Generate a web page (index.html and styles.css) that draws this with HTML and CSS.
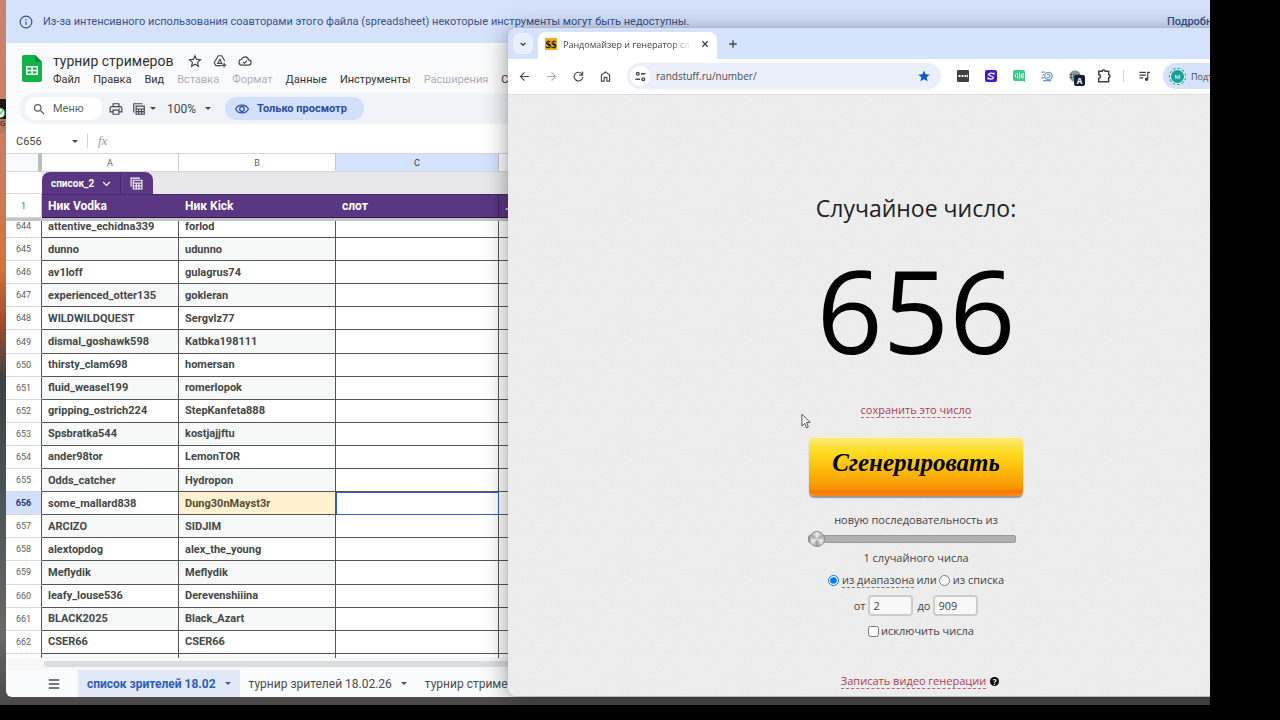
FILE: index.html
```html
<!DOCTYPE html>
<html lang="ru">
<head>
    <meta charset="UTF-8">
    <meta name="viewport" content="width=device-width, initial-scale=1.0">
    <title>Рандомайзер и генератор случайных чисел</title>
    <link rel="stylesheet" href="styles.css">
</head>
<body>
<div class="desktop">
    <div class="shortcut">
        <svg viewBox="0 0 6 12"><circle cx="0" cy="6" r="5" fill="#e4f5e4" stroke="#2c8a3d"/><path d="M0 7l3-4" stroke="#2c8a3d"/></svg>
        <span>G</span>
    </div>

    <!-- Spreadsheet window -->
    <main class="window sheets">
        <div class="notice">
            <svg class="icon-notice" viewBox="0 0 24 24" fill="none" stroke="currentColor" stroke-width="2"><circle cx="12" cy="12" r="10"/><path d="M12 11v6M12 7v2"/></svg>
            <p>Из-за интенсивного использования соавторами этого файла (spreadsheet) некоторые инструменты могут быть недоступны.</p>
            <a href="#">Подробнее</a>
        </div>

        <header class="doc-head">
            <svg class="logo" viewBox="0 0 20 27"><path fill="#12b347" d="M2 0h11l7 7v18a2 2 0 0 1-2 2H2a2 2 0 0 1-2-2V2a2 2 0 0 1 2-2z"/><path fill="#0a8a3c" d="M13 0l7 7h-5a2 2 0 0 1-2-2z"/><path fill="#fff" fill-rule="evenodd" d="M4 11h12v9H4zM5.500 12.500v2.200h3.700v-2.200zM10.800 12.500v2.200h3.700v-2.200zM5.500 16.300v2.200h3.700v-2.200zM10.800 16.300v2.200h3.700v-2.200z"/></svg>
            <div class="doc-info">
                <div class="doc-title">
                    <h1>турнир стримеров</h1>
                    <button aria-label="Избранное"><svg viewBox="0 0 24 24" fill="none" stroke="currentColor" stroke-width="2"><path d="M12 3l2.700 6.200 6.800.6-5.100 4.500 1.500 6.700-5.900-3.500L6.100 21l1.500-6.700-5.100-4.500 6.800-.6z"/></svg></button>
                    <button aria-label="Добавить на Диск"><svg viewBox="0 0 24 24" fill="none" stroke="currentColor" stroke-width="2"><path d="M15 20H5l-3-5L9 3h6l5 9M12 9l-4 7h7zM19 15v8M15 19h8"/></svg></button>
                    <button aria-label="Сохранено"><svg viewBox="0 0 24 24" fill="none" stroke="currentColor" stroke-width="2"><path d="M7 19a5 5 0 0 1-.6-10A6 6 0 0 1 18 10a4.500 4.500 0 0 1 0 9zM8.500 13.500l2.500 2.500 4.500-4.500"/></svg></button>
                </div>
                <nav class="menu">
                    <button>Файл</button>
                    <button>Правка</button>
                    <button>Вид</button>
                    <button disabled>Вставка</button>
                    <button disabled>Формат</button>
                    <button>Данные</button>
                    <button>Инструменты</button>
                    <button disabled>Расширения</button>
                    <button>Справка</button>
                </nav>
            </div>
        </header>

        <div class="toolbar">
            <button class="search"><svg viewBox="0 0 24 24" fill="none" stroke="currentColor" stroke-width="2.500"><circle cx="9.500" cy="9.500" r="6.500"/><path d="M14.500 14.500L22 22"/></svg>Меню</button>
            <button class="tool" aria-label="Печать"><svg viewBox="0 0 24 24" fill="none" stroke="currentColor" stroke-width="2"><path d="M7 8V3h10v5M6 17H2v-6a3 3 0 0 1 3-3h14a3 3 0 0 1 3 3v6h-4M7 14h10v7H7zM17 11.500h2"/></svg></button>
            <button class="tool filters" aria-label="Фильтры"><svg viewBox="0 0 24 24" fill="none" stroke="currentColor" stroke-width="2"><path d="M3 18V3h15M7 7h14v14H7zM7 12h14M7 16.500h14M11.500 12v9M16.500 12v9"/></svg><i class="caret"></i></button>
            <button class="tool zoom">100% <i class="caret"></i></button>
            <button class="view-only"><svg viewBox="0 0 24 24" fill="none" stroke="currentColor" stroke-width="2"><path d="M1 12c4-9 18-9 22 0-4 9-18 9-22 0z"/><circle cx="12" cy="12" r="4"/></svg>Только просмотр</button>
        </div>

        <div class="formula">
            <button class="cell-name">C656 <i class="caret"></i></button>
            <span class="fx">fx</span>
        </div>

        <div class="grid">
            <table class="cells frozen">
                <colgroup><col class="num"><col class="a"><col class="b"><col class="c"><col></colgroup>
                <tr class="letters"><th></th><th>A</th><th>B</th><th class="picked">C</th><th></th></tr>
                <tr class="list-row">
                    <td></td>
                    <td colspan="4"><div class="list-tab">
                        <button class="list-name">список_2 <svg viewBox="0 0 24 24" fill="none" stroke="currentColor" stroke-width="3"><path d="M3 8l9 9 9-9"/></svg></button>
                        <button class="list-calc" aria-label="Таблица"><svg viewBox="0 0 24 24" fill="none" stroke="currentColor" stroke-width="2"><path d="M2 18V2h16M6 6h16v16H6zM6 11h16M6 16.500h16M11.500 11v11M16.500 11v11"/></svg></button>
                    </div></td>
                </tr>
                <tr class="titles"><th>1</th><td>Ник Vodka</td><td>Ник Kick</td><td>слот</td><td>.</td></tr>
            </table>
            <div class="scroll">
                <table class="cells body">
                    <colgroup><col class="num"><col class="a"><col class="b"><col class="c"><col></colgroup>
                    <tr><th>644</th><td>attentive_echidna339</td><td>forlod</td><td></td><td></td></tr>
                    <tr><th>645</th><td>dunno</td><td>udunno</td><td></td><td></td></tr>
                    <tr><th>646</th><td>av1loff</td><td>gulagrus74</td><td></td><td></td></tr>
                    <tr><th>647</th><td>experienced_otter135</td><td>gokleran</td><td></td><td></td></tr>
                    <tr><th>648</th><td>WILDWILDQUEST</td><td>Sergvlz77</td><td></td><td></td></tr>
                    <tr><th>649</th><td>dismal_goshawk598</td><td>Katbka198111</td><td></td><td></td></tr>
                    <tr><th>650</th><td>thirsty_clam698</td><td>homersan</td><td></td><td></td></tr>
                    <tr><th>651</th><td>fluid_weasel199</td><td>romerlopok</td><td></td><td></td></tr>
                    <tr><th>652</th><td>gripping_ostrich224</td><td>StepKanfeta888</td><td></td><td></td></tr>
                    <tr><th>653</th><td>Spsbratka544</td><td>kostjajjftu</td><td></td><td></td></tr>
                    <tr><th>654</th><td>ander98tor</td><td>LemonTOR</td><td></td><td></td></tr>
                    <tr><th>655</th><td>Odds_catcher</td><td>Hydropon</td><td></td><td></td></tr>
                    <tr class="current"><th>656</th><td>some_mallard838</td><td class="winner">Dung30nMayst3r</td><td class="active"></td><td></td></tr>
                    <tr><th>657</th><td>ARCIZO</td><td>SIDJIM</td><td></td><td></td></tr>
                    <tr><th>658</th><td>alextopdog</td><td>alex_the_young</td><td></td><td></td></tr>
                    <tr><th>659</th><td>Meflydik</td><td>Meflydik</td><td></td><td></td></tr>
                    <tr><th>660</th><td>leafy_louse536</td><td>Derevenshiiina</td><td></td><td></td></tr>
                    <tr><th>661</th><td>BLACK2025</td><td>Black_Azart</td><td></td><td></td></tr>
                    <tr><th>662</th><td>CSER66</td><td>CSER66</td><td></td><td></td></tr>
                    <tr><th></th><td></td><td></td><td></td><td></td></tr>
                </table>
            </div>
            <div class="hbar"><span></span></div>
        </div>

        <footer class="tabs">
            <button class="all" aria-label="Все листы"><svg viewBox="0 0 24 24" fill="none" stroke="currentColor" stroke-width="2.500"><path d="M3 5h18M3 12h18M3 19h18"/></svg></button>
            <button class="tab on">список зрителей 18.02 <i class="caret"></i></button>
            <button class="tab">турнир зрителей 18.02.26 <i class="caret"></i></button>
            <button class="tab">турнир стримеров <i class="caret"></i></button>
        </footer>
    </main>

    <!-- Browser window -->
    <section class="window browser">
        <div class="strip">
            <button class="tab-search" aria-label="Поиск вкладок"><svg viewBox="0 0 24 24" fill="none" stroke="currentColor" stroke-width="4"><path d="M5 9l7 7 7-7"/></svg></button>
            <div class="page-tab">
                <span class="favicon">$$</span>
                <span class="page-name">Рандомайзер и генератор случайных чисел</span>
                <button aria-label="Закрыть"><svg viewBox="0 0 24 24" fill="none" stroke="currentColor" stroke-width="4"><path d="M4 4l16 16M20 4L4 20"/></svg></button>
            </div>
            <button class="new-tab" aria-label="Новая вкладка"><svg viewBox="0 0 24 24" fill="none" stroke="currentColor" stroke-width="4"><path d="M12 1v22M1 12h22"/></svg></button>
        </div>

        <div class="address">
            <button aria-label="Назад"><svg viewBox="0 0 24 24" fill="none" stroke="currentColor" stroke-width="2.500"><path d="M22 12H3M12 3l-9 9 9 9"/></svg></button>
            <button class="off" aria-label="Вперёд"><svg viewBox="0 0 24 24" fill="none" stroke="currentColor" stroke-width="2.500"><path d="M2 12h19M12 3l9 9-9 9"/></svg></button>
            <button aria-label="Обновить"><svg viewBox="0 0 24 24" fill="none" stroke="currentColor" stroke-width="2.500"><path d="M20 7a9.500 9.500 0 1 0 1.500 6M21 1v8h-8"/></svg></button>
            <button aria-label="Домой"><svg viewBox="0 0 24 24" fill="none" stroke="currentColor" stroke-width="2.500"><path d="M3 22V9l9-7 9 7v13h-6v-8H9v8z"/></svg></button>
            <div class="omnibox">
                <span class="site"><svg viewBox="0 0 24 24" fill="none" stroke="currentColor" stroke-width="3"><circle cx="6" cy="6" r="3"/><path d="M13 6h10M1 18h10"/><circle cx="18" cy="18" r="3"/></svg></span>
                <input type="text" value="randstuff.ru/number/" aria-label="Адрес">
                <svg class="star" viewBox="0 0 24 24"><path fill="#1558c8" d="M12 1l3.300 7.500 8.200.8-6.200 5.400 1.900 8L12 18.400l-7.200 4.300 1.900-8L.5 9.300l8.200-.8z"/></svg>
            </div>
            <div class="extensions">
                <svg viewBox="0 0 24 24"><rect width="24" height="24" rx="2" fill="#3f4347"/><path stroke="#fff" stroke-width="4" stroke-dasharray="4 2" d="M3 12h16"/><path stroke="#fff" stroke-width="1.500" d="M21 9v6"/></svg>
                <svg viewBox="0 0 24 24"><rect width="24" height="24" rx="4" fill="#4318d1"/><path fill="none" stroke="#fff" stroke-width="2.500" d="M18 9c-2-4-10-4-11 0 0 3 10 3 10 6-1 4-9 4-11 0M18 9V5M6 15v4"/></svg>
                <svg viewBox="0 0 24 24"><path fill="#3dcb85" d="M4 0h16a4 4 0 0 1 4 4v20l-4-2H4a4 4 0 0 1-4-4V4a4 4 0 0 1 4-4z"/><path stroke="#fff" stroke-width="2" d="M5 9v5M9 6v11M13 4v13M16.500 8v8M20 6v11"/></svg>
                <svg viewBox="0 0 24 24" fill="none" stroke="#6d94cf" stroke-width="2.500"><circle cx="15" cy="12" r="7.500"/><path d="M1 4h7M12 9h3a3 3 0 0 1 0 6h-4M3 9h3M1 14l5 3M4 21h16"/></svg>
                <span class="ext-globe"><svg viewBox="0 0 24 24" fill="none" stroke="#b8c9bd" stroke-width="1.500"><circle cx="12" cy="12" r="11" fill="#425a4b"/><ellipse cx="12" cy="12" rx="5" ry="11"/><path d="M1 12h22M3 6h18M3 18h18M12 1v22"/></svg><b>A</b></span>
                <svg class="puzzle" viewBox="0 0 24 24" fill="none" stroke="#3c4043" stroke-width="2.500"><path d="M3 4h6c0-3 5-3 5 0h6v6c3 0 3 5 0 5v7H3v-6c4 0 4-6 0-6z"/></svg>
            </div>
            <svg class="queue" viewBox="0 0 24 24" fill="none" stroke="#3c4043" stroke-width="2.500"><path d="M1 4h14M1 10h14M1 16h8M19 19V4h5"/><circle cx="16.500" cy="19" r="2.500" fill="#3c4043"/></svg>
            <button class="account"><span class="avatar">м</span>Подтвердите</button>
        </div>

        <div class="page">
            <h2>Случайное число:</h2>
            <output class="number">656</output>
            <a class="dashed" href="#">сохранить это число</a>
            <form class="generator">
                <button type="button" class="generate">Сгенерировать</button>
                <label for="count">новую последовательность из</label>
                <input type="range" id="count" min="1" max="100" value="1">
                <p>1 случайного числа</p>
                <div class="row">
                    <input type="radio" name="source" id="range" checked><label for="range" class="under">из диапазона</label>
                    <span class="or">или</span>
                    <input type="radio" name="source" id="list"><label for="list">из списка</label>
                </div>
                <div class="row limits">
                    <label for="from">от</label><input type="text" id="from" value="2">
                    <label for="to">до</label><input type="text" id="to" value="909">
                </div>
                <div class="row exclude"><input type="checkbox" id="exclude"><label for="exclude">исключить числа</label></div>
            </form>
            <div class="record"><a class="dashed" href="#">Записать видео генерации</a><span class="help">?</span></div>
        </div>
    </section>

    <svg class="cursor" viewBox="0 0 12 18"><path fill="#fff" stroke="#444" d="M1 1v13l3-3 2 5 2-1-2-5h4z"/></svg>
</div>
</body>
</html>
```

FILE: styles.css
```css
* {
box-sizing: border-box;
}

body {
margin: 0;
height: 100vh;
padding: 0 70px 15px 0;
background: #000;
font-family: Roboto, "Liberation Sans", sans-serif;
font-size: 12px;
color: #444746;
overflow: hidden;
}

button {
display: flex;
align-items: center;
padding: 0;
border: none;
background: none;
color: inherit;
font: inherit;
white-space: nowrap;
}

svg {
display: block;
flex: none;
width: 14px;
height: 14px;
}

h1, h2, p {
margin: 0;
font-weight: 400;
}

.desktop {
position: relative;
height: 100%;
overflow: hidden;
background: linear-gradient(#c98470, #cb7c5c 25%, #d2733c 38%, #a04a2c 46%, #3c4345 54%, #4a5456 70%, #6a6866 90%, #4a4848);
}

.shortcut {
position: absolute;
left: 0;
top: 99px;
width: 6px;
height: 34px;
padding-top: 8px;
background: linear-gradient(#1a1513 60%, #b87860 60%);
color: #222;
font-size: 8px;
overflow: hidden;
}

.shortcut svg {
width: 6px;
height: 12px;
}

.window {
position: absolute;
display: flex;
flex-direction: column;
overflow: hidden;
border-radius: 8px;
}

.caret {
border: 3px solid transparent;
border-top-color: currentColor;
border-bottom: none;
}

/* spreadsheet */
.sheets {
left: 6px;
right: 0;
top: 0;
bottom: 8px;
border-radius: 0 0 0 6px;
background: #f9fbfd;
}

.notice {
display: flex;
align-items: center;
height: 43px;
flex: none;
padding: 0 0 0 13px;
gap: 10px;
background: #d6e2fc;
color: #35528f;
font-size: 11px;
overflow: hidden;
white-space: nowrap;
}

.notice a {
margin-left: auto;
margin-right: -14px;
color: inherit;
text-decoration: none;
font-weight: 500;
}

.doc-head {
display: flex;
gap: 11px;
height: 50px;
flex: none;
padding: 9px 0 0 16px;
}

.logo {
width: 20px;
height: 27px;
margin-top: 3px;
}

.doc-title {
display: flex;
align-items: center;
gap: 11px;
height: 18px;
}

.doc-title h1 {
font-size: 14px;
margin-right: 4px;
color: #333;
}

.menu {
display: flex;
gap: 13px;
height: 18px;
color: #333;
font-size: 11px;
}

.menu button:disabled {
color: #adb0b3;
}

.toolbar {
display: flex;
align-items: center;
height: 31px;
flex: none;
margin-left: 14px;
padding-left: 5px;
background: #f0f4f9;
border-radius: 16px 0 0 16px;
}

.search {
width: 77px;
height: 23px;
padding-left: 8px;
gap: 8px;
border-radius: 12px;
background: #fff;
color: #5c5f61;
font-size: 11px;
}

.search svg {
width: 12px;
height: 12px;
}

.tool {
margin-left: 7px;
}

.filters {
margin-left: 9px;
gap: 4px;
}

.zoom {
margin-left: 11px;
gap: 9px;
}

.view-only {
height: 23px;
margin-left: 14px;
padding: 0 17px 0 10px;
gap: 8px;
border-radius: 12px;
background: #d3e0fc;
color: #2c4da0;
font-size: 11px;
font-weight: 700;
}

.formula {
display: flex;
align-items: center;
height: 29px;
flex: none;
padding-top: 5px;
background: #fff;
}

.cell-name {
width: 82px;
height: 14px;
padding: 0 9px 0 10px;
justify-content: space-between;
border-right: 1px solid #d0d3d6;
font-size: 11px;
}

.fx {
padding-left: 10px;
font-family: "Liberation Serif", serif;
font-style: italic;
font-size: 13px;
color: #9a9da0;
}

.grid {
flex: 1;
min-height: 0;
display: flex;
flex-direction: column;
width: 560px;
background: #fff;
}

.cells {
width: 100%;
table-layout: fixed;
border-collapse: separate;
border-spacing: 0;
flex: none;
}

.num { width: 36px; }
.a { width: 137px; }
.b { width: 157px; }
.c { width: 163px; }

.cells th {
padding: 0;
font-size: 9px;
font-weight: 400;
text-align: center;
color: #5c5f61;
border-right: 1px solid #c4c7c5;
border-bottom: 1px solid #d5d8da;
}

.cells td {
padding: 0 6px;
}

.letters th {
height: 19px;
border-top: 1px solid #d5d8da;
}

.letters th:first-child {
background: #f8f9fa;
border-right: 4px solid #bdbdbd;
}

.letters .picked {
background: #d3e3fd;
color: #2f3b52;
}

.list-row td {
height: 22px;
padding: 0;
border-bottom: 1px solid #d5d8da;
}

.list-row td:last-child {
background: #e8e8ea;
border-bottom: none;
}

.list-tab {
display: flex;
width: 111px;
height: 22px;
background: #5a3683;
border-radius: 8px 8px 0 0;
color: #fff;
font-size: 10px;
font-weight: 700;
}

.list-name {
width: 79px;
padding-left: 9px;
gap: 8px;
border-right: 1px solid #4a2a70;
}

.list-name svg {
width: 9px;
height: 9px;
}

.list-calc {
padding-left: 9px;
}

.list-calc svg {
width: 13px;
height: 13px;
}

.titles td {
height: 24px;
background: #5a3683;
border-top: 1px solid #472770;
border-bottom: 1px solid #2d1650;
color: #fff;
font-size: 12px;
font-weight: 700;
}

.titles td:nth-child(4) {
border-right: 1px solid #3e2163;
}

.scroll {
flex: 1;
min-height: 0;
overflow: hidden;
border-top: 3px solid #c4c4c6;
}

.body {
height: 462px;
margin-top: -6px;
}

.body td {
height: 23px;
border-right: 1px solid #555;
border-bottom: 1px solid #555;
font-size: 11px;
font-weight: 700;
}

.body th {
border-right-color: #555;
}

.body tr:nth-child(even) td:nth-child(-n+3) {
background: #f7f9f9;
}

.body .current th {
background: #d3e0fc;
color: #1c3a78;
font-weight: 700;
}

.body .current .winner {
background: #fdf1d0;
color: #5a4a30;
}

.body .current .active {
outline: 1px solid #2f5fc4;
outline-offset: -1px;
}

.hbar {
height: 12px;
flex: none;
padding: 3px 0 3px 38px;
background: #f8f8f8;
}

.hbar span {
display: block;
height: 6px;
border-radius: 3px;
background: #dadce0;
}

.tabs {
display: flex;
height: 27px;
flex: none;
color: #4a4d50;
}

.all {
padding: 0 17px 0 41px;
}

.tab {
padding: 0 9px;
gap: 9px;
}

.tab.on {
background: #e1e9f8;
color: #2f5bc0;
font-weight: 700;
}

/* browser */
.browser {
left: 508px;
right: -114px;
top: 28px;
bottom: 9px;
background: #fff;
box-shadow: 0 0 1px #777, 0 3px 24px rgba(0, 0, 0, 0.4);
font-family: "Open Sans", "Noto Sans", sans-serif;
}

.strip {
display: flex;
align-items: center;
height: 31px;
flex: none;
padding-left: 5px;
background: #d5e2fc;
}

.tab-search {
width: 20px;
height: 21px;
justify-content: center;
border-radius: 7px;
background: #e9f1ff;
}

.tab-search svg,
.page-tab button svg {
width: 8px;
height: 8px;
}

.page-tab {
display: flex;
align-items: center;
align-self: flex-end;
width: 179px;
height: 27px;
margin-left: 5px;
padding: 0 8px 3px 7px;
gap: 6px;
border-radius: 8px 8px 0 0;
background: #fff;
}

.favicon {
width: 12px;
height: 12px;
background: #f5a81c;
color: #111;
font: 700 11px/12px "Liberation Serif", serif;
text-align: center;
}

.page-name {
flex: 1;
overflow: hidden;
white-space: nowrap;
font-size: 9px;
-webkit-mask-image: linear-gradient(90deg, #000 85%, transparent);
mask-image: linear-gradient(90deg, #000 85%, transparent);
}

.page-tab button {
margin-left: 4px;
}

.new-tab {
padding-left: 12px;
}

.new-tab svg {
width: 8px;
height: 8px;
}

.address {
display: flex;
align-items: center;
height: 35px;
flex: none;
padding: 0 0 1px 11px;
gap: 16px;
}

.address > button svg {
width: 11px;
height: 11px;
}

.address > .off {
color: #aaadb0;
}

.omnibox {
display: flex;
align-items: center;
width: 314px;
height: 26px;
padding: 0 11px 0 3px;
border-radius: 13px;
background: #ebeffa;
}

.site {
display: flex;
align-items: center;
justify-content: center;
width: 20px;
height: 20px;
border-radius: 10px;
background: #fff;
}

.site svg {
width: 11px;
height: 11px;
}

.omnibox input {
flex: 1;
min-width: 0;
border: none;
padding: 0 6px;
background: none;
color: #4a4d52;
font: 10px "Open Sans", sans-serif;
}

.star {
width: 12px;
height: 12px;
}

.extensions {
display: flex;
align-items: center;
gap: 16px;
}

.extensions svg {
width: 12px;
height: 12px;
}

.ext-globe {
position: relative;
}

.ext-globe b {
position: absolute;
left: 5px;
top: 5px;
width: 11px;
height: 11px;
border-radius: 2px;
background: #17203a;
color: #fff;
font-size: 8px;
line-height: 11px;
text-align: center;
}

.extensions .puzzle {
width: 14px;
height: 14px;
}

.queue {
width: 27px;
height: 12px;
margin-left: -4px;
padding-left: 15px;
border-left: 1px solid #ccd4e6;
}

.address > .account {
flex: 1;
height: 26px;
margin-left: -3px;
padding-left: 7px;
gap: 6px;
border-radius: 13px 0 0 13px;
background: #d5e2fa;
font-size: 9px;
}

.avatar {
width: 15px;
height: 15px;
border: 1px solid #fff;
outline: 1px dashed #14938a;
border-radius: 50%;
background: #14a098;
color: #fff;
font-size: 8px;
line-height: 12px;
text-align: center;
}

.page {
flex: 1;
min-height: 0;
display: flex;
flex-direction: column;
align-items: center;
padding-top: 96px;
background: #eee url("data:image/svg+xml,%3Csvg xmlns='http://www.w3.org/2000/svg' width='120' height='120'%3E%3Cfilter id='n'%3E%3CfeTurbulence baseFrequency='.7' numOctaves='2' stitchTiles='stitch'/%3E%3CfeColorMatrix type='saturate' values='0'/%3E%3C/filter%3E%3Crect width='120' height='120' filter='url(%23n)' opacity='.06'/%3E%3C/svg%3E");
border-top: 1px solid #ddd;
color: #444;
}

.page h2 {
font-size: 23px;
line-height: 34px;
color: #222;
}

.number {
margin-top: 16px;
font-size: 116px;
line-height: 136px;
color: #000;
}

.dashed {
border-bottom: 1px dashed #c0607a;
color: #b03a55;
font-size: 11px;
line-height: 14px;
text-decoration: none;
}

.number + .dashed {
margin-top: 26px;
}

.generator {
display: flex;
flex-direction: column;
align-items: center;
font-size: 11px;
line-height: 16px;
}

.generate {
justify-content: center;
width: 214px;
height: 59px;
margin: 19px 0 16px;
padding-bottom: 8px;
border-radius: 5px;
background: linear-gradient(#fbeb83, #fddc20 25%, #fbb60a 60%, #f79200 88%, #f8760a 92%, #f98c10);
box-shadow: 0 2px 1px #999, inset 0 1px #fff3ae;
color: #000;
font: italic 700 25px "Liberation Serif", serif;
}

input[type="range"] {
appearance: none;
width: 208px;
height: 16px;
margin: 3px 8px 3px 0;
background: none;
}

input[type="range"]::-webkit-slider-runnable-track {
height: 8px;
border: 1px solid #999;
border-radius: 2px;
background: #b0b0b0;
}

input[type="range"]::-webkit-slider-thumb {
appearance: none;
width: 16px;
height: 16px;
margin-top: -5px;
border: 1px solid #888;
border-radius: 50%;
background: conic-gradient(#eee, #aaa, #eee, #999, #eee, #aaa, #eee);
}

.row {
display: flex;
align-items: center;
margin-top: 6px;
}

.row input[type="radio"] {
width: 11px;
height: 11px;
margin: 0 3px 0 0;
}

.row input[type="checkbox"] {
width: 11px;
height: 11px;
margin: 0 2px 0 0;
}

.under {
border-bottom: 1px dashed #777;
line-height: 15px;
}

.or {
margin: 0 2px;
}

.limits {
gap: 3px;
margin-top: 7px;
}

.limits input {
width: 45px;
height: 21px;
padding: 0 3px;
border: 2px solid #ccc;
border-radius: 4px;
background: #f8f8f8;
color: #444;
font: 11px "Open Sans", sans-serif;
}

.limits input + label {
margin-left: 1px;
}

.exclude {
margin-top: 7px;
padding-left: 10px;
}

.record {
display: flex;
align-items: center;
gap: 4px;
margin-top: 35px;
padding-left: 8px;
}

.help {
width: 9px;
height: 9px;
border-radius: 50%;
background: #000;
color: #fff;
font-size: 8px;
font-weight: 700;
line-height: 9px;
text-align: center;
}

.cursor {
position: absolute;
left: 801px;
top: 413px;
width: 11px;
height: 17px;
}
```
